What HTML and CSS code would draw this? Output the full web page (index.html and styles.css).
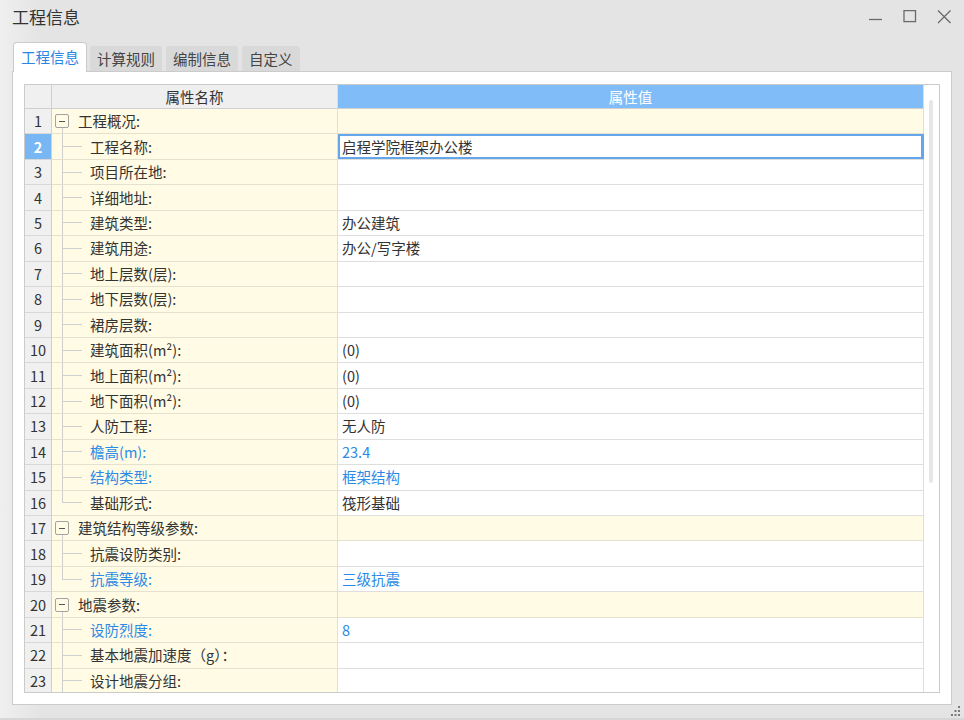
FILE: index.html
```html
<!DOCTYPE html>
<html lang="zh-CN">
<head>
<meta charset="utf-8">
<title>工程信息</title>
<link rel="stylesheet" href="styles.css">
</head>
<body>
<div class="window">
  <div class="titlebar">
    <div class="title">工程信息</div>
    <div class="controls">
      <div class="ctl"><svg width="14" height="14" viewBox="0 0 14 14"><line x1="0" y1="9.5" x2="13" y2="9.5" stroke="#6a6a6a" stroke-width="1.3"/></svg></div>
      <div class="ctl"><svg width="14" height="14" viewBox="0 0 14 14"><rect x="1" y="0.6" width="11.5" height="11" fill="none" stroke="#6a6a6a" stroke-width="1.3"/></svg></div>
      <div class="ctl"><svg width="14" height="14" viewBox="0 0 14 14"><path d="M1 0.5 L13.5 13 M13.5 0.5 L1 13" stroke="#6a6a6a" stroke-width="1.3" fill="none"/></svg></div>
    </div>
  </div>

  <div class="tabs">
    <div class="tab active">工程信息</div>
    <div class="tab">计算规则</div>
    <div class="tab">编制信息</div>
    <div class="tab">自定义</div>
  </div>

  <div class="panel">
    <div class="table">
      <div class="rows">
        <div class="row head">
          <div class="c num"></div>
          <div class="c name hname">属性名称</div>
          <div class="c val hval">属性值</div>
        </div>

        <div class="row group">
          <div class="c num">1</div>
          <div class="c name gname"><span class="box"></span><span class="glabel">工程概况:</span></div>
          <div class="c val gval"></div>
        </div>
        <div class="row">
          <div class="c num sel">2</div>
          <div class="c name"><span class="tw"></span>工程名称:</div>
          <div class="c val edit">启程学院框架办公楼</div>
        </div>
        <div class="row">
          <div class="c num">3</div>
          <div class="c name"><span class="tw"></span>项目所在地:</div>
          <div class="c val"></div>
        </div>
        <div class="row">
          <div class="c num">4</div>
          <div class="c name"><span class="tw"></span>详细地址:</div>
          <div class="c val"></div>
        </div>
        <div class="row">
          <div class="c num">5</div>
          <div class="c name"><span class="tw"></span>建筑类型:</div>
          <div class="c val">办公建筑</div>
        </div>
        <div class="row">
          <div class="c num">6</div>
          <div class="c name"><span class="tw"></span>建筑用途:</div>
          <div class="c val">办公/写字楼</div>
        </div>
        <div class="row">
          <div class="c num">7</div>
          <div class="c name"><span class="tw"></span>地上层数(层):</div>
          <div class="c val"></div>
        </div>
        <div class="row">
          <div class="c num">8</div>
          <div class="c name"><span class="tw"></span>地下层数(层):</div>
          <div class="c val"></div>
        </div>
        <div class="row">
          <div class="c num">9</div>
          <div class="c name"><span class="tw"></span>裙房层数:</div>
          <div class="c val"></div>
        </div>
        <div class="row">
          <div class="c num">10</div>
          <div class="c name"><span class="tw"></span>建筑面积(m²):</div>
          <div class="c val">(0)</div>
        </div>
        <div class="row">
          <div class="c num">11</div>
          <div class="c name"><span class="tw"></span>地上面积(m²):</div>
          <div class="c val">(0)</div>
        </div>
        <div class="row">
          <div class="c num">12</div>
          <div class="c name"><span class="tw"></span>地下面积(m²):</div>
          <div class="c val">(0)</div>
        </div>
        <div class="row">
          <div class="c num">13</div>
          <div class="c name"><span class="tw"></span>人防工程:</div>
          <div class="c val">无人防</div>
        </div>
        <div class="row blue">
          <div class="c num">14</div>
          <div class="c name"><span class="tw"></span>檐高(m):</div>
          <div class="c val">23.4</div>
        </div>
        <div class="row blue">
          <div class="c num">15</div>
          <div class="c name"><span class="tw"></span>结构类型:</div>
          <div class="c val">框架结构</div>
        </div>
        <div class="row">
          <div class="c num">16</div>
          <div class="c name"><span class="tw last"></span>基础形式:</div>
          <div class="c val">筏形基础</div>
        </div>

        <div class="row group">
          <div class="c num">17</div>
          <div class="c name gname"><span class="box"></span><span class="glabel">建筑结构等级参数:</span></div>
          <div class="c val gval"></div>
        </div>
        <div class="row">
          <div class="c num">18</div>
          <div class="c name"><span class="tw"></span>抗震设防类别:</div>
          <div class="c val"></div>
        </div>
        <div class="row blue">
          <div class="c num">19</div>
          <div class="c name"><span class="tw last"></span>抗震等级:</div>
          <div class="c val">三级抗震</div>
        </div>

        <div class="row group">
          <div class="c num">20</div>
          <div class="c name gname"><span class="box"></span><span class="glabel">地震参数:</span></div>
          <div class="c val gval"></div>
        </div>
        <div class="row blue">
          <div class="c num">21</div>
          <div class="c name"><span class="tw"></span>设防烈度:</div>
          <div class="c val">8</div>
        </div>
        <div class="row">
          <div class="c num">22</div>
          <div class="c name"><span class="tw"></span>基本地震加速度（g）：</div>
          <div class="c val"></div>
        </div>
        <div class="row">
          <div class="c num">23</div>
          <div class="c name"><span class="tw"></span>设计地震分组:</div>
          <div class="c val"></div>
        </div>
      </div>
      <div class="scroll"><div class="thumb"></div></div>
    </div>
  </div>

  <div class="footer">
    <svg class="grip" width="12" height="12" viewBox="0 0 12 12">
      <rect x="8" y="0" width="2" height="2" fill="#7a7a7a"/>
      <rect x="4.5" y="4" width="2" height="2" fill="#7a7a7a"/>
      <rect x="8" y="4" width="2" height="2" fill="#7a7a7a"/>
      <rect x="1" y="8" width="2" height="2" fill="#7a7a7a"/>
      <rect x="4.5" y="8" width="2" height="2" fill="#7a7a7a"/>
      <rect x="8" y="8" width="2" height="2" fill="#7a7a7a"/>
    </svg>
  </div>
</div>
</body>
</html>
```

FILE: styles.css
```css
* { box-sizing: border-box; }

html, body {
  margin: 0;
  padding: 0;
}

body {
  width: 964px;
  height: 720px;
  overflow: hidden;
  background: linear-gradient(to right, #efefef 0, #e4e4e4 40px);
  font-family: "Noto Sans CJK SC", "Noto Sans", sans-serif;
  color: #333;
}

.window {
  display: flex;
  flex-direction: column;
  height: 720px;
}

/* title bar */
.titlebar {
  height: 34px;
  display: flex;
  align-items: center;
  justify-content: space-between;
  padding-left: 12px;
  padding-right: 3px;
}

.title {
  font-size: 17px;
  color: #333;
  line-height: 20px;
}

.controls {
  display: flex;
}

.ctl {
  width: 34px;
  height: 34px;
  display: flex;
  align-items: center;
  justify-content: center;
}

.ctl svg { display: block; }

/* tabs */
.tabs {
  margin-top: 8px;
  height: 30px;
  padding-left: 13px;
  display: flex;
  align-items: flex-end;
  gap: 4px;
}

.tab {
  height: 25px;
  margin-bottom: 1px;
  padding: 0 7px;
  display: flex;
  align-items: center;
  font-size: 14.5px;
  color: #444;
  background: #d9d9d9;
  border-radius: 3px 3px 0 0;
  line-height: 18px;
}

.tab.active {
  position: relative;
  z-index: 1;
  height: 30px;
  margin-bottom: 0;
  margin-right: -1px;
  padding: 0 7px 1px 7px;
  background: #fff;
  color: #2a86e2;
  border: 1px solid #cbcbcb;
  border-bottom: none;
  border-radius: 4px 4px 0 0;
}

/* panel */
.panel {
  margin: -1px 12px 0 12px;
  background: #fff;
  border: 1px solid #cbcbcb;
  padding: 12px 11px 11px 11px;
}

.table {
  height: 609px;
  border: 1px solid #cbcbcb;
  display: flex;
  overflow: hidden;
}

.rows {
  width: 899px;
  display: flex;
  flex-direction: column;
  overflow: hidden;
}

.row {
  height: 25.45px;
  flex: none;
  display: grid;
  grid-template-columns: 27px 286px 586px;
}

.row.head { height: 24px; }

.c {
  display: flex;
  align-items: center;
  border-bottom: 1px solid #dedede;
  border-right: 1px solid #dedede;
  font-size: 14.5px;
  line-height: 18px;
  white-space: nowrap;
  overflow: hidden;
}

.num {
  justify-content: center;
  background: #f0f0f0;
  border-right-color: #cfcfcf;
  border-bottom-color: #d8d8d8;
  color: #333;
}

.num.sel {
  background: #78b6f4;
  color: #fff;
  font-weight: bold;
}

.name {
  background: #fffbe4;
  border-bottom-color: #e4e1cf;
}

.val {
  background: #fff;
  padding-left: 4px;
}

.head .c {
  border-bottom-color: #cfcfcf;
}

.hname {
  background: #efefef;
  justify-content: center;
}

.hval {
  background: #80bcf8;
  color: #fff;
  justify-content: center;
  padding-left: 0;
  border-bottom-color: #6eaef0;
}

.gval {
  background: #fffbe4;
  border-bottom-color: #e4e1cf;
}

.val.edit {
  box-shadow: inset 0 0 0 2px #64a6ec;
  border-right-color: #64a6ec;
}

.row.blue .name,
.row.blue .val {
  color: #2b8ae6;
}

/* tree */
.gname {
  background-image: linear-gradient(#cfcfcf, #cfcfcf);
  background-repeat: no-repeat;
  background-position: 10px calc(50% + 7px);
  background-size: 1px 50%;
}

.box {
  width: 14px;
  height: 14px;
  margin-left: 3px;
  border: 1px solid #a2a2a2;
  border-radius: 2px;
  background: #fffbe4 linear-gradient(#555, #555) no-repeat center / 6px 1px;
  flex: none;
}

.glabel {
  margin-left: 9px;
}

.tw {
  width: 38px;
  height: 100%;
  flex: none;
  background-image: linear-gradient(#cfcfcf, #cfcfcf), linear-gradient(#cfcfcf, #cfcfcf);
  background-repeat: no-repeat;
  background-position: 10px 0, 10px 50%;
  background-size: 1px 100%, 20px 1px;
}

.tw.last {
  background-size: 1px 50%, 20px 1px;
}

/* scrollbar */
.scroll {
  width: 15px;
  flex: none;
  background: #fff;
  padding-top: 15px;
  padding-left: 5px;
}

.thumb {
  width: 4px;
  height: 383px;
  border-radius: 2px;
  background: #e6e6e6;
}

/* footer */
.footer {
  flex: 1;
  display: flex;
  justify-content: flex-end;
  align-items: flex-start;
  padding-top: 1px;
  padding-right: 2px;
  border-bottom: 2px solid #d6d6d6;
}

.grip { display: block; }
```
